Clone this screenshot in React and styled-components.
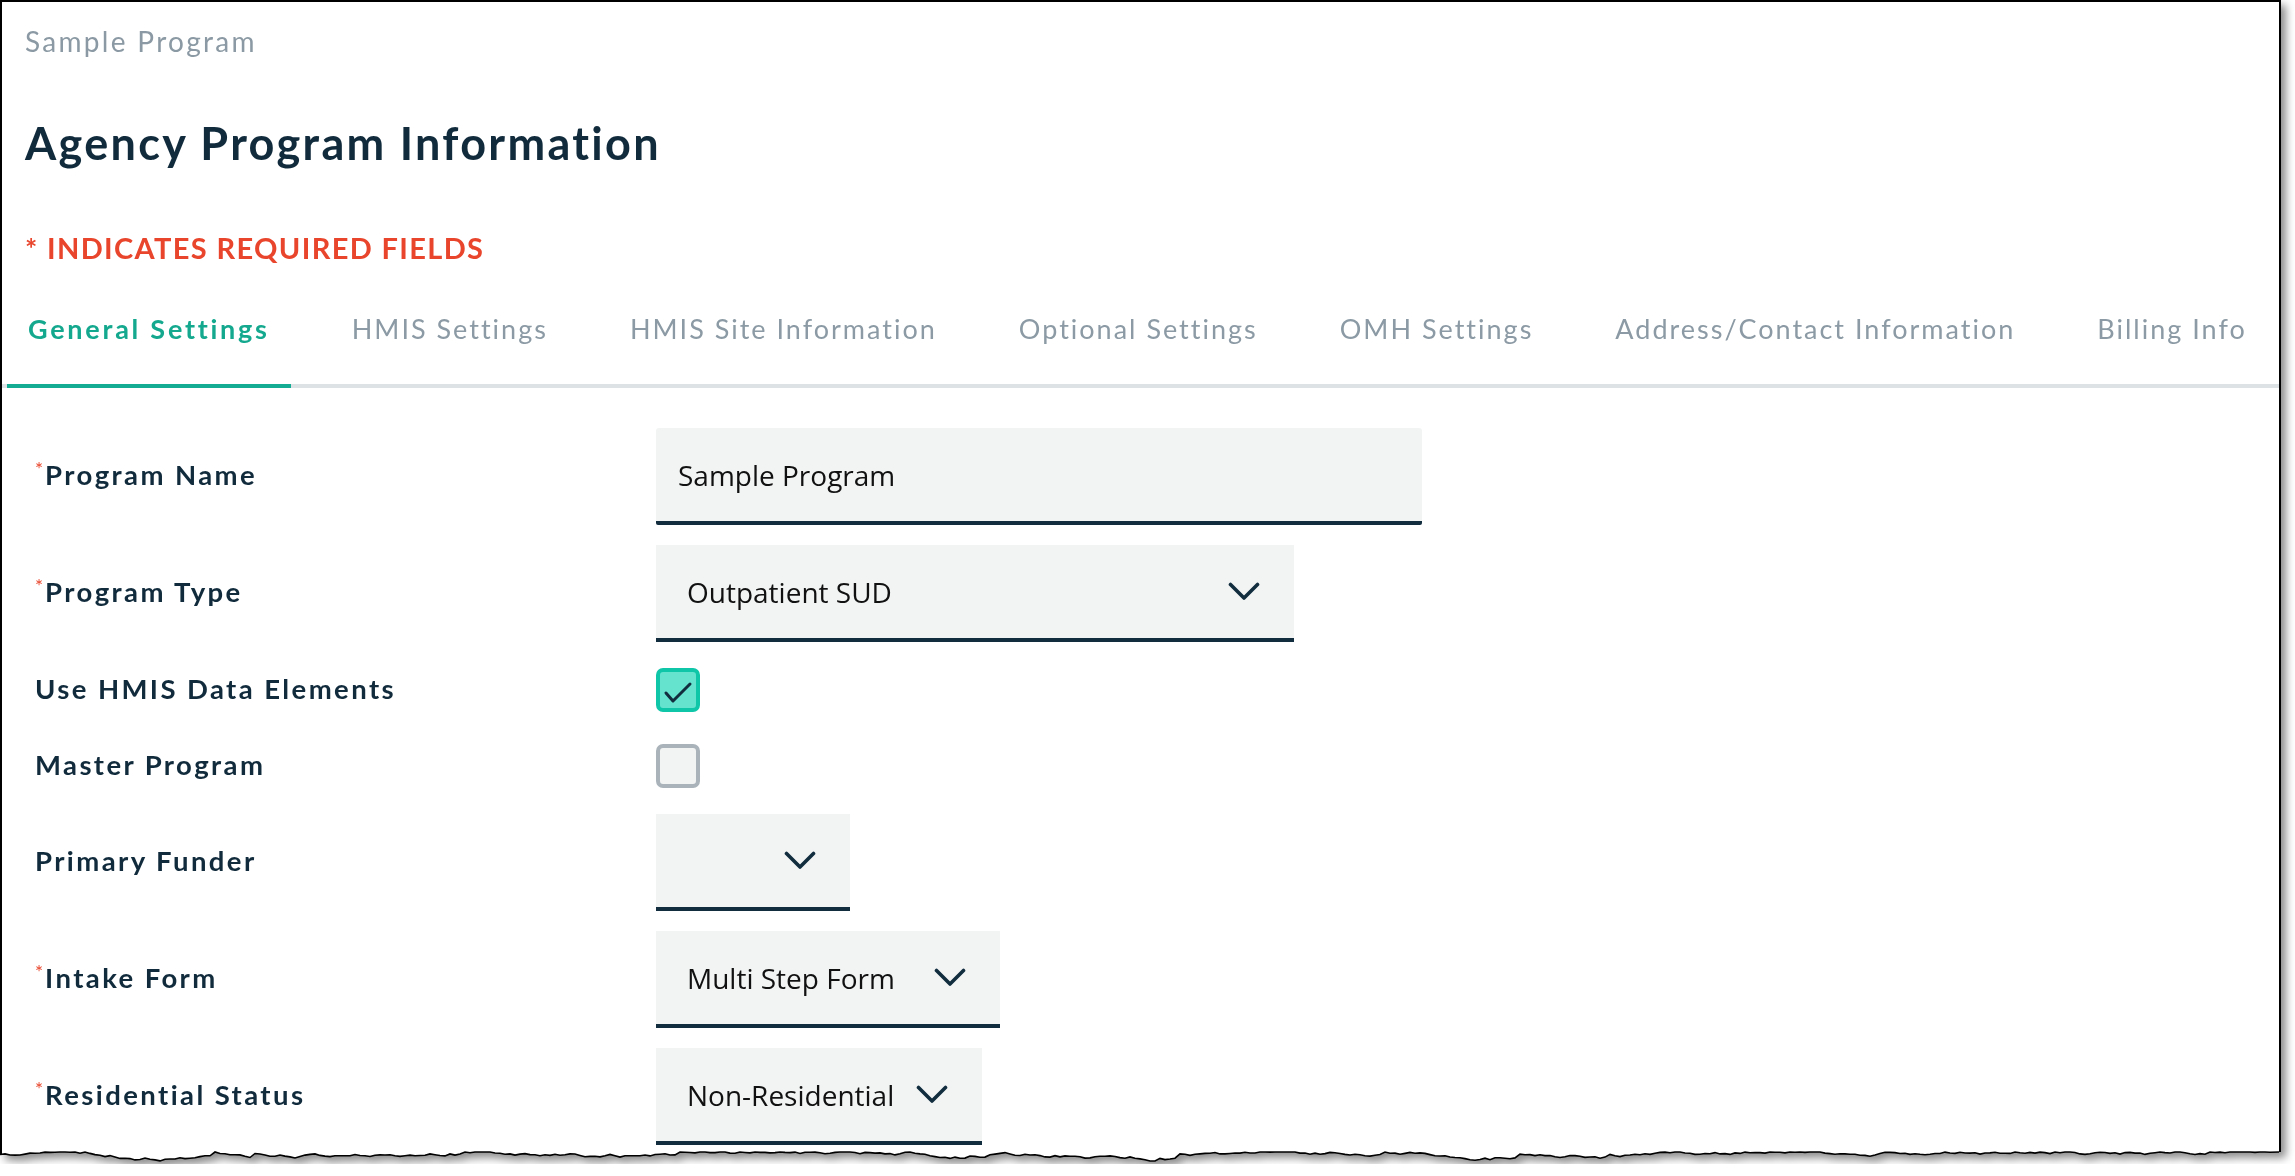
import React from "react";
import styled, { createGlobalStyle } from "styled-components";

const GlobalStyle = createGlobalStyle`
	body {
		margin: 0;
		background: #fff;
		font-family: Lato, "Liberation Sans", sans-serif;
	}
`;

// torn paper edge at the bottom of the screenshot frame
const tornPoints = (() => {
	let seed = 11;
	const rand = () => {
		seed = (seed * 16807) % 2147483647;
		return seed / 2147483647;
	};
	const pts = [];
	let y = 6;
	for (let x = 0; x <= 2279; x += 5) {
		y += (rand() - 0.5) * 3;
		if (rand() > 0.93) y -= 3;
		y = Math.max(2, Math.min(11, y));
		pts.push([x, +y.toFixed(1)]);
	}
	pts[pts.length - 1][0] = 2279;
	return pts;
})();

const Frame = styled.div`
	width: 2282px;
	filter: drop-shadow(5px 5px 4px rgba(0, 0, 0, 0.45));
`;

const Sheet = styled.div`
	box-sizing: border-box;
	width: 2281px;
	height: 1150px;
	background: #fff;
	border: 2px solid #000;
	border-bottom: none;
	overflow: hidden;
`;

const Edge = styled.svg`
	display: block;
	width: 2281px;
	height: 14px;
`;

const Header = styled.div`
	padding-left: 23px;
`;

const Breadcrumb = styled.div`
	height: 78px;
	line-height: 78px;
	font-size: 28px;
	color: #8a99a3;
	letter-spacing: 2.3px;
`;

const Title = styled.h1`
	margin: 0;
	height: 126px;
	line-height: 126px;
	font-size: 45px;
	font-weight: 700;
	color: #112b3c;
	letter-spacing: 2.3px;
`;

const Required = styled.div`
	height: 84px;
	line-height: 84px;
	font-size: 29px;
	font-weight: 700;
	color: #e8452c;
	letter-spacing: 1.35px;
`;

const TabBar = styled.div`
	display: flex;
	gap: 40px;
	padding-left: 5px;
	border-bottom: 4px solid #dde2e4;
`;

const Tab = styled.div`
	padding: 0 21px 16px;
	line-height: 78px;
	font-size: 27px;
	white-space: nowrap;
	font-weight: ${(p) => (p.active ? 700 : 400)};
	letter-spacing: ${(p) => (p.active ? "2.75px" : "2px")};
	color: ${(p) => (p.active ? "#14a98f" : "#8b9aa4")};
	border-bottom: 4px solid ${(p) => (p.active ? "#14ad93" : "transparent")};
	margin-bottom: -4px;
`;

const Form = styled.div`
	display: flex;
	flex-direction: column;
	gap: 20px;
	padding: 40px 0 0 33px;
`;

const Row = styled.div`
	display: grid;
	grid-template-columns: 621px auto;
	align-items: center;
	justify-items: start;
	min-height: ${(p) => (p.compact ? "56px" : "97px")};
`;

const Label = styled.div`
	font-size: 27.5px;
	line-height: 34px;
	font-weight: 700;
	color: #112b3c;
	letter-spacing: 2.4px;
	margin-top: -3px;
`;

const Star = styled.span`
	color: #e8452c;
	font-size: 19px;
	font-weight: 400;
	line-height: 0;
	letter-spacing: 0;
	margin-right: 2px;
	vertical-align: 9px;
`;

const Field = styled.div`
	box-sizing: border-box;
	display: flex;
	align-items: center;
	justify-content: space-between;
	height: 97px;
	width: ${(p) => p.width}px;
	padding: 0 ${(p) => (p.select ? 34 : 22)}px 0 ${(p) => (p.select ? 31 : 22)}px;
	background: #f2f3f3;
	border-bottom: 4px solid #112d3e;
	border-radius: ${(p) => (p.select ? "0" : "3px 3px 2px 2px")};
	font-family: "Open Sans", "Noto Sans", sans-serif;
	font-size: 28px;
	color: #111;
`;

const Check = styled.div`
	box-sizing: border-box;
	width: 44px;
	height: 44px;
	border-radius: 7px;
	border: 4px solid ${(p) => (p.checked ? "#0fc6a9" : "#a9b3b9")};
	background: ${(p) => (p.checked ? "#66e3cf" : "#f2f3f3")};
	display: flex;
`;

const Chevron = () => (
	<svg width="32" height="20" viewBox="0 0 32 20" fill="none">
		<path d="M2.5 2.5 L16 16 L29.5 2.5" stroke="#112d3e" strokeWidth="3.6" strokeLinecap="round" strokeLinejoin="round" />
	</svg>
);

const Tick = () => (
	<svg width="36" height="36" viewBox="0 0 36 36" fill="none">
		<path d="M6 21 L13 29 L30 12" stroke="#112d3e" strokeWidth="3" strokeLinecap="round" strokeLinejoin="round" />
	</svg>
);

const tabs = [
	"General Settings",
	"HMIS Settings",
	"HMIS Site Information",
	"Optional Settings",
	"OMH Settings",
	"Address/Contact Information",
	"Billing Info",
];

const FieldLabel = ({ required, children }) => (
	<Label>
		{required && <Star>*</Star>}
		{children}
	</Label>
);

const Select = ({ width, value }) => (
	<Field select width={width}>
		<span>{value}</span>
		<Chevron />
	</Field>
);

const App = () => {
	const fill = tornPoints.map(([x, y]) => `L${x} ${y}`).join(" ");
	const line = tornPoints.map(([x, y], i) => `${i ? "L" : "M"}${x} ${y}`).join(" ");
	return (
		<>
			<GlobalStyle />
			<Frame>
				<Sheet>
					<Header>
						<Breadcrumb>Sample Program</Breadcrumb>
						<Title>Agency Program Information</Title>
						<Required>* INDICATES REQUIRED FIELDS</Required>
					</Header>
					<TabBar>
						{tabs.map((t, i) => (
							<Tab key={t} active={i === 0}>
								{t}
							</Tab>
						))}
					</TabBar>
					<Form>
						<Row>
							<FieldLabel required>Program Name</FieldLabel>
							<Field width={766}>Sample Program</Field>
						</Row>
						<Row>
							<FieldLabel required>Program Type</FieldLabel>
							<Select width={638} value="Outpatient SUD" />
						</Row>
						<Row compact>
							<FieldLabel>Use HMIS Data Elements</FieldLabel>
							<Check checked>
								<Tick />
							</Check>
						</Row>
						<Row compact>
							<FieldLabel>Master Program</FieldLabel>
							<Check />
						</Row>
						<Row>
							<FieldLabel>Primary Funder</FieldLabel>
							<Select width={194} value="" />
						</Row>
						<Row>
							<FieldLabel required>Intake Form</FieldLabel>
							<Select width={344} value="Multi Step Form" />
						</Row>
						<Row>
							<FieldLabel required>Residential Status</FieldLabel>
							<Select width={326} value="Non-Residential" />
						</Row>
					</Form>
				</Sheet>
				<Edge viewBox="0 0 2281 14" preserveAspectRatio="none">
					<path d={`M0 0 L0 ${tornPoints[0][1]} ${fill} L2281 ${tornPoints[tornPoints.length - 1][1]} L2281 0 Z`} fill="#fff" />
					<path d={`M1 0 L1 ${tornPoints[0][1]}`} stroke="#000" strokeWidth="2" />
					<path d={`M2280 0 L2280 ${tornPoints[tornPoints.length - 1][1]}`} stroke="#000" strokeWidth="2" />
					<path d={line} stroke="#000" strokeWidth="1.6" fill="none" />
				</Edge>
			</Frame>
		</>
	);
};

export default App;
